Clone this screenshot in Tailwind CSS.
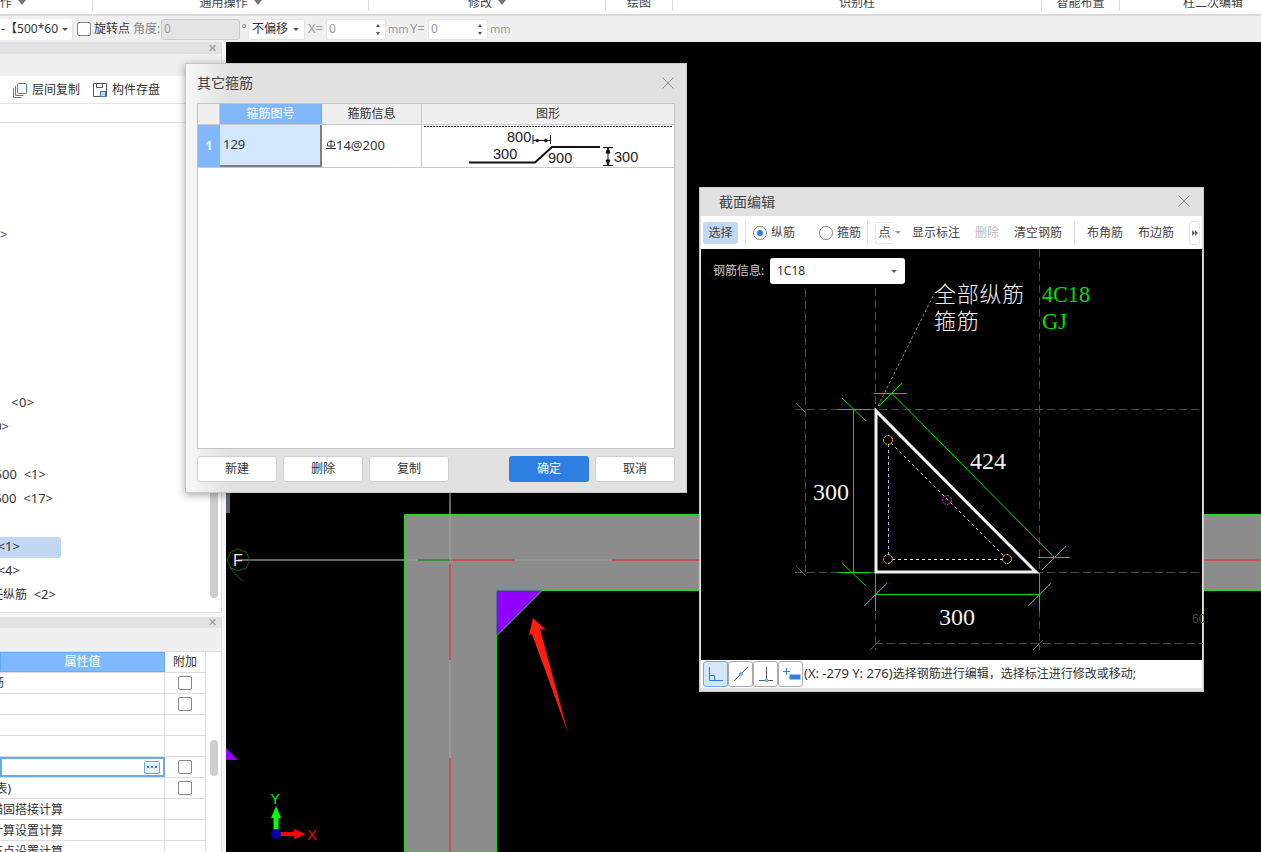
<!DOCTYPE html>
<html lang="zh-CN">
<head>
  <meta charset="UTF-8" />
  <title>截面编辑</title>
  <script src="https://cdn.jsdelivr.net/npm/@tailwindcss/browser@4"></script>
</head>
<body class="w-[1261px] h-[852px] overflow-hidden relative bg-black text-[12px] text-[#333] font-['Noto_Sans','Noto_Sans_CJK_SC',sans-serif]">

  <!-- ribbon group labels, clipped at the top -->
  <div class="h-[16px] bg-white border-b-2 border-[#dcdcdc] overflow-hidden flex">
    <div class="w-[93px] shrink-0 h-[11px] border-r border-[#ddd] flex items-start"><span class="-mt-[6px] -ml-[12px] leading-[18px] whitespace-nowrap text-[#444]">操作</span><i class="ml-[6px] mt-0 w-0 h-0 border-x-[4px] border-x-transparent border-t-[5px] border-t-[#777]"></i></div>
    <div class="w-[276px] shrink-0 h-[11px] border-r border-[#ddd] flex justify-center items-start"><span class="-mt-[6px] leading-[18px] whitespace-nowrap text-[#444]">通用操作</span><i class="ml-[6px] w-0 h-0 border-x-[4px] border-x-transparent border-t-[5px] border-t-[#777]"></i></div>
    <div class="w-[237px] shrink-0 h-[11px] border-r border-[#ddd] flex justify-center items-start"><span class="-mt-[6px] leading-[18px] whitespace-nowrap text-[#444]">修改</span><i class="ml-[6px] w-0 h-0 border-x-[4px] border-x-transparent border-t-[5px] border-t-[#777]"></i></div>
    <div class="w-[67px] shrink-0 h-[11px] border-r border-[#ddd] flex justify-center"><span class="-mt-[6px] leading-[18px] whitespace-nowrap text-[#444]">绘图</span></div>
    <div class="w-[369px] shrink-0 h-[11px] border-r border-[#ddd] flex justify-center"><span class="-mt-[6px] leading-[18px] whitespace-nowrap text-[#444]">识别柱</span></div>
    <div class="w-[78px] shrink-0 h-[11px] border-r border-[#ddd] flex justify-center"><span class="-mt-[6px] leading-[18px] whitespace-nowrap text-[#444]">智能布置</span></div>
    <div class="w-[186px] shrink-0 h-[11px] flex justify-center"><span class="-mt-[6px] leading-[18px] whitespace-nowrap text-[#444]">柱二次编辑</span></div>
  </div>

  <!-- property bar -->
  <div class="h-[26px] bg-[#f0f0f0] flex items-center relative">
    <div class="w-[73px] h-[21px] bg-white rounded-r-[3px] border-r border-[#e4e4e4] flex items-center justify-end pr-[4px] overflow-hidden whitespace-nowrap">-【500*60<i class="ml-[4px] w-0 h-0 border-x-[3px] border-x-transparent border-t-[3px] border-t-[#555]"></i></div>
    <div class="w-[14px] h-[14px] bg-white border border-[#888] rounded-[2px] ml-[4px]"></div>
    <span class="ml-[3px] w-[36px] whitespace-nowrap">旋转点</span>
    <span class="ml-[3px] w-[28px] whitespace-nowrap text-[#888]">角度:</span>
    <div class="w-[79px] h-[21px] bg-[#e4e4e4] border border-[#c5cbd6] rounded-[3px] pl-[2px] flex items-center text-[#999]">0</div>
    <span class="w-[8px] text-center text-[#777]">°</span>
    <div class="w-[57px] h-[21px] bg-white rounded-[3px] border border-[#e4e4e4] flex items-center justify-between px-[3px]">不偏移<i class="mr-[2px] w-0 h-0 border-x-[3px] border-x-transparent border-t-[3px] border-t-[#555]"></i></div>
    <span class="ml-[3px] w-[18px] text-[#999] text-[13px]">X=</span>
    <div class="w-[60px] h-[21px] bg-white rounded-[3px] border border-[#e4e4e4] flex items-center justify-between pl-[2px] pr-[5px] text-[#999]">0<span class="flex flex-col gap-[5px]"><i class="w-0 h-0 border-x-[2px] border-x-transparent border-b-[3px] border-b-[#555]"></i><i class="w-0 h-0 border-x-[2px] border-x-transparent border-t-[3px] border-t-[#555]"></i></span></div>
    <span class="ml-[2px] w-[22px] text-[#999] text-[11px]">mm</span>
    <span class="w-[18px] text-[#999] text-[13px]">Y=</span>
    <div class="w-[60px] h-[21px] bg-white rounded-[3px] border border-[#e4e4e4] flex items-center justify-between pl-[2px] pr-[5px] text-[#999]">0<span class="flex flex-col gap-[5px]"><i class="w-0 h-0 border-x-[2px] border-x-transparent border-b-[3px] border-b-[#555]"></i><i class="w-0 h-0 border-x-[2px] border-x-transparent border-t-[3px] border-t-[#555]"></i></span></div>
    <span class="ml-[2px] text-[#999] text-[11px]">mm</span>
  </div>

  <div class="flex h-[810px]">
    <!-- left dock -->
    <div class="w-[226px] bg-[#f5f5f5] flex flex-col shrink-0">
      <div class="w-[222px] h-[571px] shrink-0 border-r border-b border-[#ddd] bg-white flex flex-col relative">
        <div class="h-[12px] bg-[#e2e2e2] flex items-center justify-end pr-[4px] text-[#999] text-[11px] shrink-0">✕</div>
        <div class="h-[22px] bg-[#f0f0f0] shrink-0"></div>
        <div class="h-[28px] border-b border-[#e2e2e2] flex items-center shrink-0 pl-[12px]">
          <svg width="16" height="16" viewBox="0 0 16 16" fill="none" stroke="#3a7bd5"><rect x="5.500" y="1.500" width="9" height="10" rx="1"/><path d="M3.500 4v9.500h8M1.500 6v9.500h8" stroke="#777"/></svg>
          <span class="ml-[4px] w-[48px]">层间复制</span>
          <svg class="ml-[12px]" width="16" height="16" viewBox="0 0 16 16" fill="none" stroke="#555"><path d="M1.500 1.500h13v13h-13z"/><path d="M4.500 1.500v4h6v-4"/><rect x="8.500" y="9.500" width="5" height="5" fill="#bcd6f5" stroke="#3a7bd5"/></svg>
          <span class="ml-[4px]">构件存盘</span>
        </div>
        <div class="h-[19px] border-b border-[#e2e2e2] shrink-0"></div>
        <div class="flex-1 pt-[4px] flex flex-col text-[13px]">
          <div class="h-[24px]"></div><div class="h-[24px]"></div><div class="h-[24px]"></div><div class="h-[24px]"></div>
          <div class="h-[24px] flex items-center"><span class="text-[#444]">&gt;</span></div>
          <div class="h-[24px]"></div><div class="h-[24px]"></div><div class="h-[24px]"></div><div class="h-[24px]"></div><div class="h-[24px]"></div><div class="h-[24px]"></div>
          <div class="h-[24px] flex items-center pl-[11px] whitespace-pre tracking-[0.5px]">&lt;0&gt;</div>
          <div class="h-[24px] flex items-center"><span class="w-[9px] flex justify-end overflow-hidden whitespace-pre">0&gt;</span></div>
          <div class="h-[24px]"></div>
          <div class="h-[24px] flex items-center"><span class="w-[46px] flex justify-end overflow-hidden whitespace-pre">600  &lt;1&gt;</span></div>
          <div class="h-[24px] flex items-center"><span class="w-[53px] flex justify-end overflow-hidden whitespace-pre">600  &lt;17&gt;</span></div>
          <div class="h-[24px]"></div>
          <div class="h-[24px] flex items-center"><span class="w-[61px] h-[21px] bg-[#c0d8f2] rounded-r-[3px] flex items-center"><span class="w-[20px] flex justify-end overflow-hidden whitespace-pre">&lt;1&gt;</span></span></div>
          <div class="h-[24px] flex items-center"><span class="w-[20px] flex justify-end overflow-hidden whitespace-pre">&lt;4&gt;</span></div>
          <div class="h-[24px] flex items-center"><span class="w-[56px] flex justify-end items-center overflow-hidden whitespace-pre"><span class="text-[12px]">任纵筋</span>  &lt;2&gt;</span></div>
        </div>
        <div class="absolute right-[3px] top-[440px] bottom-[14px] w-[8px] bg-[#cdcdcd] rounded-[4px]"></div>
      </div>
      <div class="h-[4px] shrink-0"></div>
      <div class="w-[222px] h-[235px] shrink-0 overflow-hidden border-r border-[#ddd] bg-white flex flex-col relative">
        <div class="h-[11px] bg-[#e2e2e2] flex items-center justify-end pr-[4px] text-[#999] text-[11px] shrink-0">✕</div>
        <div class="h-[24px] bg-[#f0f0f0] border-b border-[#ddd] shrink-0"></div>
        <div class="w-[206px] border-r border-[#ddd]">
          <div class="h-[21px] flex border-b border-[#ddd]">
            <div class="w-[165px] bg-[#7fb9fb] text-white border border-[#6aaaf0] flex items-center justify-center">属性值</div>
            <div class="flex-1 flex items-center justify-center text-[#333]">附加</div>
          </div>
          <div class="h-[21px] flex border-b border-[#ddd]">
            <div class="w-[165px] border-r border-[#ddd] flex items-center"><span class="w-[4px] flex justify-end overflow-hidden">筋</span></div>
            <div class="flex-1 flex items-center justify-center"><span class="w-[14px] h-[14px] border border-[#888] rounded-[2px]"></span></div>
          </div>
          <div class="h-[21px] flex border-b border-[#ddd]">
            <div class="w-[165px] border-r border-[#ddd]"></div>
            <div class="flex-1 flex items-center justify-center"><span class="w-[14px] h-[14px] border border-[#888] rounded-[2px]"></span></div>
          </div>
          <div class="h-[21px] flex border-b border-[#ddd]"><div class="w-[165px] border-r border-[#ddd]"></div></div>
          <div class="h-[21px] flex border-b border-[#ddd]"><div class="w-[165px] border-r border-[#ddd]"></div></div>
          <div class="h-[21px] flex border-b border-[#ddd]">
            <div class="w-[165px] border-2 border-[#6aa9ea] flex items-center justify-end pr-[3px]">
              <span class="w-[16px] h-[13px] bg-[#e4effc] border border-[#6aa9ea] rounded-[2px] flex items-center justify-center gap-[2px]"><i class="w-[2px] h-[2px] bg-[#2f7de1]"></i><i class="w-[2px] h-[2px] bg-[#2f7de1]"></i><i class="w-[2px] h-[2px] bg-[#2f7de1]"></i></span>
            </div>
            <div class="flex-1 flex items-center justify-center"><span class="w-[14px] h-[14px] border border-[#888] rounded-[2px]"></span></div>
          </div>
          <div class="h-[21px] flex border-b border-[#ddd]">
            <div class="w-[165px] border-r border-[#ddd] flex items-center pt-[1px]"><span class="w-[11px] flex justify-end overflow-hidden whitespace-pre">表)</span></div>
            <div class="flex-1 flex items-center justify-center"><span class="w-[14px] h-[14px] border border-[#888] rounded-[2px]"></span></div>
          </div>
          <div class="h-[21px] flex border-b border-[#ddd]">
            <div class="w-[165px] border-r border-[#ddd] flex items-center pt-[1px]"><span class="w-[63px] flex justify-end overflow-hidden whitespace-pre">锚固搭接计算</span></div>
          </div>
          <div class="h-[21px] flex border-b border-[#ddd]">
            <div class="w-[165px] border-r border-[#ddd] flex items-center pt-[1px]"><span class="w-[63px] flex justify-end overflow-hidden whitespace-pre">计算设置计算</span></div>
          </div>
          <div class="h-[21px] flex border-b border-[#ddd]">
            <div class="w-[165px] border-r border-[#ddd] flex items-center pt-[1px]"><span class="w-[63px] flex justify-end overflow-hidden whitespace-pre">节点设置计算</span></div>
          </div>
        </div>
        <div class="absolute right-[3px] top-[123px] h-[36px] w-[8px] bg-[#cdcdcd] rounded-[4px]"></div>
      </div>
    </div>

    <!-- drawing canvas -->
    <div class="flex-1 relative">
      <svg class="absolute left-0 top-0" width="1035" height="810" viewBox="226 42 1035 810">
        <path d="M1261 514.500H404.500V852H496.500V590.500H1261Z" fill="#8c8c8c" stroke="#1fd81f"/>
        <path d="M238 560H1261M450 492V852" stroke="#a0a0a0" stroke-width="1.500" opacity=".85"/>
        <path d="M418 560H450" stroke="#3f8f3f" stroke-width="2"/>
        <path d="M451 560H515M612 560H1261M450 564V660M450 758V852" stroke="#d03a3a" stroke-width="1.500"/>
        <path d="M496.500 590.500H542L496.500 636Z" fill="#8f00ff"/>
        <path d="M542 590.500L496.500 636" stroke="#3fe03f"/>
        <path d="M533 618L546 630L540 629L568 733L532 634L529 635Z" fill="#ff1f0f"/>
        <path d="M226 748L238 760H226Z" fill="#8f00ff"/>
        <path d="M238 549L246 552L250 560L246 568L238 571L231 568L227 560L231 552ZM230 568L242 581" fill="none" stroke="#0d6b0d"/>
        <text x="233" y="566" fill="#e8e8e8" font-size="16" font-family="Liberation Sans">F</text>
        <path d="M276 830V814" stroke="#00ff00" stroke-width="5"/><path d="M276 806L281 818H271Z" fill="#00ff00"/>
        <path d="M280 834H296" stroke="#ff0000" stroke-width="4"/><path d="M306 834L294 829V839Z" fill="#ff0000"/>
        <circle cx="276" cy="834" r="5" fill="#0000b0"/>
        <text x="270.500" y="804" fill="#00ff00" font-size="14" font-family="Liberation Sans">Y</text>
        <text x="307" y="840" fill="#ff0000" font-size="15" font-family="Liberation Sans">X</text>
      </svg>
      <div class="absolute left-0 top-[450px] w-[4px] h-[21px] bg-[#5a6472]"></div>
    </div>
  </div>

  <!-- 其它箍筋 dialog -->
  <div class="absolute left-[185px] top-[63px] w-[502px] h-[430px] bg-gradient-to-r from-[#f8f8f8] from-0% to-[#e1e1e1] to-[9%] border border-[#c8c8c8] shadow-[0_2px_8px_rgba(0,0,0,0.35)] px-[11px] flex flex-col">
    <div class="h-[39px] flex items-center justify-between pb-[2px]">
      <span class="text-[14px] text-[#444]">其它箍筋</span>
      <svg width="12" height="12" viewBox="0 0 12 12" stroke="#8a8a8a" class="mr-[1px]"><path d="M.5.500L11.500 11.500M11.500.500L.500 11.500"/></svg>
    </div>
    <div class="h-[346px] w-[478px] bg-white border border-[#c4c4c4] flex flex-col">
      <div class="h-[20px] flex shrink-0 bg-[#efefef]">
        <div class="w-[22px] border-r border-[#c8c8c8]"></div>
        <div class="w-[102px] bg-[#7fb9fb] text-white flex items-center justify-center border-r border-[#6aaaf0]">箍筋图号</div>
        <div class="w-[100px] flex items-center justify-center border-r border-[#c8c8c8]">箍筋信息</div>
        <div class="flex-1 flex items-center justify-center">图形</div>
      </div>
      <div class="h-[44px] flex border-t border-b border-[#c8c8c8] shrink-0">
        <div class="w-[22px] bg-[#7fb9fb] text-white font-bold flex items-center justify-center">1</div>
        <div class="w-[102px] bg-[#d3e8fe] border-r-2 border-b-2 border-[#7f7f7f] flex items-center pl-[3px] text-[13px]">129</div>
        <div class="w-[100px] border-r border-[#c8c8c8] flex items-center pl-[4px] text-[13px]">
          <svg width="10" height="10" viewBox="0 0 10 10" fill="none" stroke="#333" class="mb-[3px]"><path d="M1.500 6V3.500C1.500 2 3 1.500 5 1.500C7 1.500 8.500 2 8.500 3.500V6H1.500M5 0V9M0 8.500H10"/></svg><span>14@200</span>
        </div>
        <div class="flex-1 relative">
          <svg class="absolute left-0 top-0" width="252" height="43" viewBox="422 124 252 43">
            <path d="M424 125.500H672" stroke="#223" stroke-dasharray="2 1"/>
            <path d="M469 161.500H535L552 146H600" fill="none" stroke="#111" stroke-width="2"/>
            <path d="M533 134V143M550.500 134V143M533 139.500H550" stroke="#111"/>
            <path d="M535 139.500L538 138V141ZM548 139.500L545 138V141Z" fill="#111" stroke="#111"/>
            <path d="M603 146.500H613M603 164.500H613M608 147V164M608 147L606 152H610ZM608 164L606 159H610Z" stroke="#111"/>
            <g font-size="14.500" fill="#222" font-family="Liberation Sans"><text x="507" y="141">800</text><text x="493" y="158">300</text><text x="548" y="162">900</text><text x="614" y="161">300</text></g>
          </svg>
        </div>
      </div>
    </div>
    <div class="flex mt-[7px] h-[26px]">
      <button class="w-[80px] bg-white border border-[#d0d0d0] rounded-[3px]">新建</button>
      <button class="w-[80px] ml-[6px] bg-white border border-[#d0d0d0] rounded-[3px]">删除</button>
      <button class="w-[80px] ml-[6px] bg-white border border-[#d0d0d0] rounded-[3px]">复制</button>
      <button class="w-[80px] ml-[60px] bg-[#2e7fe2] text-white rounded-[3px]">确定</button>
      <button class="w-[80px] ml-[6px] bg-white border border-[#d0d0d0] rounded-[3px]">取消</button>
    </div>
  </div>

  <!-- 截面编辑 dialog -->
  <div class="absolute left-[699px] top-[187px] w-[505px] h-[505px] bg-[#e1e1e1] border border-[#c8c8c8] px-[1px] pb-[3px] flex flex-col">
    <div class="h-[28px] flex items-center justify-between pl-[18px] pr-[12px] shrink-0 pb-[2px]">
      <span class="text-[14px] text-[#444]">截面编辑</span>
      <svg width="12" height="12" viewBox="0 0 12 12" stroke="#8a8a8a"><path d="M.5.500L11.500 11.500M11.500.500L.500 11.500"/></svg>
    </div>
    <div class="h-[33px] bg-white flex items-center shrink-0 pl-[2px] whitespace-nowrap text-[#444]">
      <span class="w-[35px] h-[22px] bg-[#c0d8f2] rounded-[3px] flex items-center justify-center">选择</span>
      <span class="w-[1px] h-[24px] bg-[#ddd] ml-[7px]"></span>
      <span class="w-[14px] h-[14px] ml-[7px] rounded-full border border-[#888] flex items-center justify-center"><i class="w-[6px] h-[6px] rounded-full bg-[#2e7fe2]"></i></span>
      <span class="ml-[4px] w-[24px]">纵筋</span>
      <span class="w-[14px] h-[14px] ml-[24px] rounded-full border border-[#888]"></span>
      <span class="ml-[4px] w-[24px]">箍筋</span>
      <span class="w-[1px] h-[24px] bg-[#ddd] ml-[6px]"></span>
      <span class="w-[18px] h-[22px] ml-[7px] border-l border-t border-b border-[#e6e6e6] rounded-l-[3px] flex items-center justify-center">点</span>
      <span class="w-[8px] ml-[2px] flex items-center"><i class="w-0 h-0 border-x-[3px] border-x-transparent border-t-[3px] border-t-[#999]"></i></span>
      <span class="ml-[9px] w-[48px]">显示标注</span>
      <span class="ml-[15px] w-[24px] text-[#bbb]">删除</span>
      <span class="ml-[15px] w-[48px]">清空钢筋</span>
      <span class="w-[1px] h-[24px] bg-[#ddd] ml-[12px]"></span>
      <span class="ml-[12px] w-[36px]">布角筋</span>
      <span class="ml-[15px] w-[36px]">布边筋</span>
      <span class="ml-[15px] w-[11px] h-[24px] border border-[#e6e6e6] rounded-[3px] flex items-center justify-center gap-0"><i class="w-0 h-0 border-y-[3px] border-y-transparent border-l-[3px] border-l-[#666]"></i><i class="w-0 h-0 border-y-[3px] border-y-transparent border-l-[3px] border-l-[#666]"></i></span>
    </div>
    <div class="h-[411px] bg-black relative shrink-0">
      <svg class="absolute left-0 top-0" width="503" height="411" viewBox="701 249 503 411">
        <g stroke="#464c56" stroke-dasharray="8 4" fill="none">
          <path d="M795 409.500H1203M795 572.500H1203M875 643.500H1203M805.500 289V572M875.500 288V650M1039.500 249V650"/>
        </g>
        <path d="M796 403L806 413M796 566L806 576M870 650L880 640M1033 650L1043 640" stroke="#5a6270"/>
        <path d="M878 406L933 296" stroke="#8a8a8a" stroke-dasharray="3 2"/>
        <g stroke="#00e000" fill="none">
          <path d="M853.500 409V572.500M838 409.500H871M838 572.500H871M842 398L866 421M842 563L866 586"/>
          <path d="M875.500 594.500H1039M875.500 573V611M1039.500 573V611M864 606L887 583M1028 606L1051 583"/>
          <path d="M892 393.500L1054 557M874 393.500H907M1038 557.500H1070M879 406L902 383M1042 570L1066 546"/>
        </g>
        <path d="M876 411V572H1036L876 411Z" fill="none" stroke="#f2f2f2" stroke-width="3"/>
        <path d="M888.500 444V555" stroke="#9cc4ff" stroke-dasharray="3 3"/>
        <path d="M892 559.500H1003M891 443L1004 556" stroke="#e8e8ff" stroke-dasharray="3 3"/>
        <g fill="none" stroke="#f5c518" stroke-dasharray="3 1"><circle cx="888" cy="440" r="4.500"/><circle cx="888" cy="559" r="4.500"/><circle cx="1007" cy="559" r="4.500"/></g>
        <circle cx="947" cy="500" r="4.500" fill="none" stroke="#e020e0" stroke-dasharray="3 1"/>
        <g fill="#f2f2f2" font-size="22" font-family="Noto Sans CJK SC" font-weight="300" letter-spacing=".7"><text x="934" y="302">全部纵筋</text><text x="934" y="329">箍筋</text></g>
        <g fill="#00e000" font-size="23" font-family="Liberation Serif"><text x="1042" y="302" textLength="48" lengthAdjust="spacingAndGlyphs">4C18</text><text x="1042" y="329" textLength="25" lengthAdjust="spacingAndGlyphs">GJ</text></g>
        <g fill="#f2f2f2" font-size="24" font-family="Liberation Serif"><text x="813" y="500">300</text><text x="970" y="469">424</text><text x="939" y="625">300</text></g>
        <text x="1192" y="623" fill="#444" font-size="12" font-family="Liberation Sans">60</text>
      </svg>
      <span class="absolute left-[12px] top-[14px] text-[#ccc] leading-[16px]">钢筋信息:</span>
      <div class="absolute left-[69px] top-[9px] w-[135px] h-[26px] bg-white rounded-[3px] flex items-center justify-between pl-[7px] pr-[8px]">1C18<i class="w-0 h-0 border-x-[3px] border-x-transparent border-t-[3px] border-t-[#666]"></i></div>
    </div>
    <div class="h-[28px] bg-white flex items-center pl-[2px] shrink-0 whitespace-nowrap">
      <span class="w-[25px] h-[26px] bg-[#d6e6fb] border border-[#6aa9ea] rounded-[3px] flex items-center justify-center">
        <svg width="16" height="16" viewBox="0 0 16 16" fill="none" stroke="#2e7fe2"><path d="M1.500 1V14.500H15M1.500 9.500H6.500V14"/></svg>
      </span>
      <span class="w-[25px] h-[26px] border border-[#aaa] rounded-[3px] flex items-center justify-center">
        <svg width="16" height="16" viewBox="0 0 16 16" fill="none" stroke="#555"><path d="M1 15L15 1"/><circle cx="8" cy="8" r="1.500" fill="#8ab8ef" stroke="#6aa9ea"/></svg>
      </span>
      <span class="w-[25px] h-[26px] border border-[#aaa] rounded-[3px] flex items-center justify-center">
        <svg width="16" height="16" viewBox="0 0 16 16" fill="none" stroke="#555"><path d="M1 14.500H15M8.500 1V14"/><circle cx="8.500" cy="14.500" r="1.500" fill="#8ab8ef" stroke="#6aa9ea"/></svg>
      </span>
      <span class="w-[25px] h-[26px] border border-[#aaa] rounded-[3px] flex items-center justify-center">
        <svg width="20" height="16" viewBox="0 0 20 16" fill="none" stroke="#2e7fe2"><path d="M5.500 2V9M2 5.500H9"/><rect x="9" y="9" width="10" height="4" fill="#2e7fe2"/></svg>
      </span>
      <span class="ml-[1px] text-[#333]"><span class="text-[13px]">(X: -279 Y: 276)</span>选择钢筋进行编辑，选择标注进行修改或移动;</span>
    </div>
  </div>

</body>
</html>
